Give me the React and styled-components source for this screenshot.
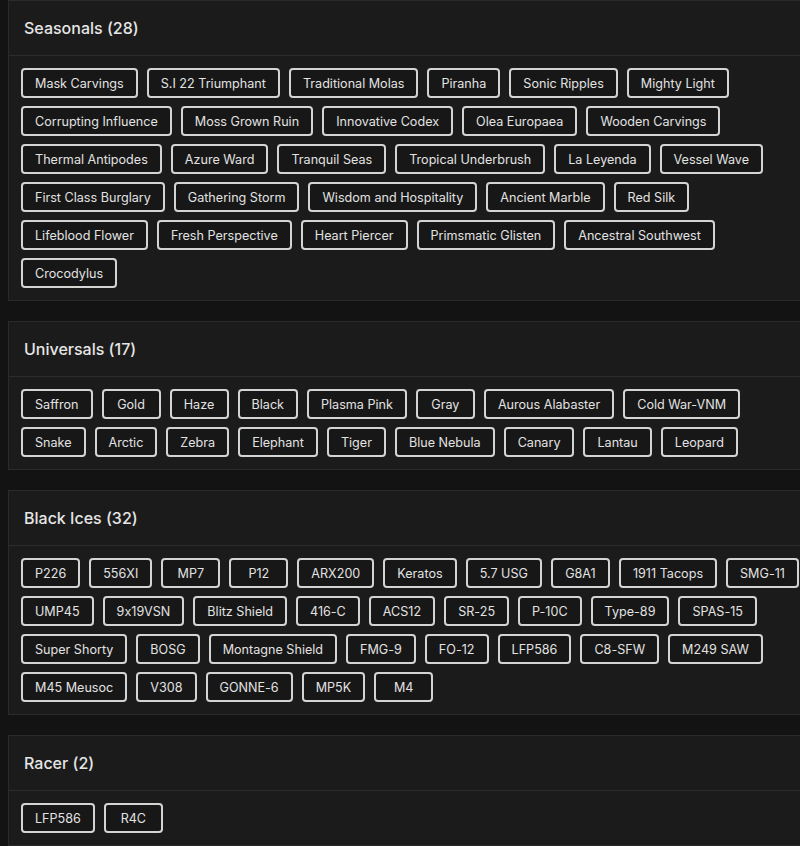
import React from "react";
import styled, { createGlobalStyle } from "styled-components";

const GlobalStyle = createGlobalStyle`
  html, body {
    margin: 0;
    padding: 0;
    background: #131313;
    overflow-x: hidden;
  }
  body {
    font-family: Inter, "Noto Sans", "Liberation Sans", sans-serif;
    font-feature-settings: "calt" 0;
    color: #e4e4e4;
  }
`;

const sections = [
  {
    title: "Seasonals",
    items: [
      "Mask Carvings", "S.I 22 Triumphant", "Traditional Molas", "Piranha", "Sonic Ripples", "Mighty Light",
      "Corrupting Influence", "Moss Grown Ruin", "Innovative Codex", "Olea Europaea", "Wooden Carvings",
      "Thermal Antipodes", "Azure Ward", "Tranquil Seas", "Tropical Underbrush", "La Leyenda", "Vessel Wave",
      "First Class Burglary", "Gathering Storm", "Wisdom and Hospitality", "Ancient Marble", "Red Silk",
      "Lifeblood Flower", "Fresh Perspective", "Heart Piercer", "Primsmatic Glisten", "Ancestral Southwest",
      "Crocodylus",
    ],
  },
  {
    title: "Universals",
    items: [
      "Saffron", "Gold", "Haze", "Black", "Plasma Pink", "Gray", "Aurous Alabaster", "Cold War-VNM",
      "Snake", "Arctic", "Zebra", "Elephant", "Tiger", "Blue Nebula", "Canary", "Lantau", "Leopard",
    ],
  },
  {
    title: "Black Ices",
    items: [
      "P226", "556XI", "MP7", "P12", "ARX200", "Keratos", "5.7 USG", "G8A1", "1911 Tacops", "SMG-11",
      "UMP45", "9x19VSN", "Blitz Shield", "416-C", "ACS12", "SR-25", "P-10C", "Type-89", "SPAS-15",
      "Super Shorty", "BOSG", "Montagne Shield", "FMG-9", "FO-12", "LFP586", "C8-SFW", "M249 SAW",
      "M45 Meusoc", "V308", "GONNE-6", "MP5K", "M4",
    ],
  },
  {
    title: "Racer",
    items: ["LFP586", "R4C"],
  },
];

const Page = styled.div`
  display: flex;
  flex-direction: column;
  gap: 20px;
  padding-left: 8px;
  width: 812px;
`;

// the cards run on past the right edge of the window
const Card = styled.section`
  background: #1b1b1b;
  border: 1px solid #2a2a2a;
  border-right: none;
`;

const Header = styled.div`
  height: 54px;
  display: flex;
  align-items: center;
  padding: 0 15px;
  border-bottom: 1px solid #2c2c2c;
  font-size: 16px;
  font-weight: 500;
  color: #e6e6e6;
`;

const Body = styled.div`
  display: flex;
  flex-wrap: wrap;
  gap: 8px 9px;
  padding: 12px;
`;

const Chip = styled.span`
  box-sizing: border-box;
  height: 30px;
  min-width: 59px;
  display: inline-flex;
  align-items: center;
  justify-content: center;
  padding: 0 12px;
  border: 2px solid #d4d4d4;
  border-radius: 4px;
  background: #171717;
  color: #e2e2e2;
  font-size: 12.6px;
  white-space: nowrap;
`;

export default function App() {
  return (
    <>
      <GlobalStyle />
      <Page>
        {sections.map((s) => (
          <Card key={s.title}>
            <Header>
              {s.title} ({s.items.length})
            </Header>
            <Body>
              {s.items.map((item) => (
                <Chip key={item}>{item}</Chip>
              ))}
            </Body>
          </Card>
        ))}
      </Page>
    </>
  );
}
